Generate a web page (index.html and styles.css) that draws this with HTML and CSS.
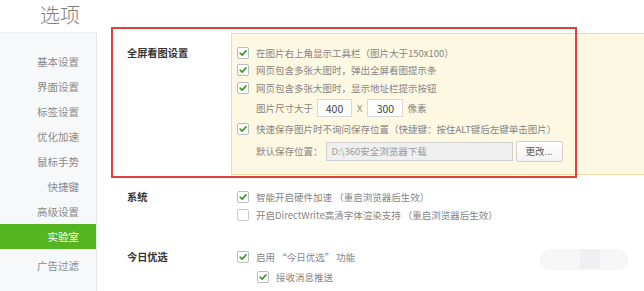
FILE: index.html
```html
<!DOCTYPE html>
<html lang="zh-CN">
<head>
<meta charset="utf-8">
<title>选项</title>
<link rel="stylesheet" href="styles.css">
</head>
<body>
<div class="page">
  <header class="top"><h1 class="title">选项</h1></header>
  <div class="main">
    <nav class="side">
      <div class="nav-item">基本设置</div>
      <div class="nav-item">界面设置</div>
      <div class="nav-item">标签设置</div>
      <div class="nav-item">优化加速</div>
      <div class="nav-item">鼠标手势</div>
      <div class="nav-item">快捷键</div>
      <div class="nav-item">高级设置</div>
      <div class="nav-item active">实验室</div>
      <div class="nav-item last">广告过滤</div>
    </nav>
    <div class="content">
      <section class="sec sec-pic">
        <div class="sec-label">全屏看图设置</div>
        <div class="panel">
          <div class="opt r1"><span class="cb"><svg viewBox="0 0 12 12"><path d="M2.6 6.2 L5 8.6 L9.6 3.4"/></svg></span>在图片右上角显示工具栏（图片大于150x100）</div>
          <div class="opt r1"><span class="cb"><svg viewBox="0 0 12 12"><path d="M2.6 6.2 L5 8.6 L9.6 3.4"/></svg></span>网页包含多张大图时，弹出全屏看图提示条</div>
          <div class="opt r1"><span class="cb"><svg viewBox="0 0 12 12"><path d="M2.6 6.2 L5 8.6 L9.6 3.4"/></svg></span>网页包含多张大图时，显示地址栏提示按钮</div>
          <div class="opt sub size-row">图片尺寸大于<span class="num">400</span><span class="x">X</span><span class="num n2">300</span><span class="unit">像素</span></div>
          <div class="opt r5"><span class="cb"><svg viewBox="0 0 12 12"><path d="M2.6 6.2 L5 8.6 L9.6 3.4"/></svg></span>快速保存图片时不询问保存位置（快捷键：按住ALT键后左键单击图片）</div>
          <div class="opt sub path-row">默认保存位置：<span class="path">D:\360安全浏览器下载</span><span class="btn">更改...</span></div>
        </div>
      </section>
      <section class="sec sec-sys">
        <div class="sec-label plain">系统</div>
        <div class="list">
          <div class="opt"><span class="cb"><svg viewBox="0 0 12 12"><path d="M2.6 6.2 L5 8.6 L9.6 3.4"/></svg></span>智能开启硬件加速 （重启浏览器后生效）</div>
          <div class="opt"><span class="cb off"></span>开启DirectWrite高清字体渲染支持 （重启浏览器后生效）</div>
        </div>
      </section>
      <section class="sec sec-today">
        <div class="sec-label plain">今日优选</div>
        <div class="list">
          <div class="opt"><span class="cb"><svg viewBox="0 0 12 12"><path d="M2.6 6.2 L5 8.6 L9.6 3.4"/></svg></span>启用 “今日优选” 功能</div>
          <div class="opt indent"><span class="cb"><svg viewBox="0 0 12 12"><path d="M2.6 6.2 L5 8.6 L9.6 3.4"/></svg></span>接收消息推送</div>
        </div>
      </section>
    </div>
  </div>
  <div class="annot"></div>
  <div class="smudge"><span></span></div>
</div>
</body>
</html>
```
FILE: styles.css
```css
* { box-sizing: border-box; }
html, body { margin: 0; padding: 0; background: #fff; }
body {
  font-family: "Noto Sans CJK SC", "Microsoft YaHei", sans-serif;
  font-size: 9.5px;
  color: #858585;
}
.page { position: relative; width: 644px; height: 291px; overflow: hidden; }

.top { height: 32px; }
.title {
  margin: 0;
  padding-left: 40px;
  font-size: 20px;
  line-height: 30px;
  font-weight: 300;
  color: #808080;
}

.main { display: flex; height: 259px; }

.side {
  width: 97px;
  flex: none;
  background: #f7f8fa;
  border-right: 1px solid #e3e5e8;
  border-top: 1px solid #eef0f2;
  padding-top: 16px;
}
.nav-item {
  height: 25px;
  line-height: 25px;
  text-align: right;
  padding-right: 17px;
  color: #8a8a8a;
  font-size: 10.5px;
}
.nav-item.active { background: #55b521; color: #fff; }
.nav-item.last { margin-top: 4px; }

.content { flex: 1; min-width: 0; }

.sec { display: flex; padding-left: 30px; }
.sec-label {
  width: 104px;
  flex: none;
  font-size: 10.2px;
  font-weight: bold;
  color: #333;
  padding-top: 11px;
  line-height: 18px;
}
.sec-label.plain { padding-top: 0; }

.sec-pic { margin-top: 1px; }
.panel {
  flex: 1;
  background: #fdf8e2;
  border: 1px solid #eedca6;
  border-right: none;
  padding: 10px 0 12px 5px;
}
.opt {
  display: flex;
  align-items: center;
  height: 18px;
  white-space: nowrap;
}
.opt.r1 { height: 17.5px; }
.opt.r5 { margin-top: 2px; height: 17.5px; }
.opt.sub { padding-left: 19px; }

.cb {
  width: 12px;
  height: 12px;
  flex: none;
  margin-right: 7px;
  border: 1px solid #b8bdc2;
  border-radius: 2px;
  background: #fff;
  display: flex;
}
.cb svg { width: 10px; height: 10px; }
.cb path { fill: none; stroke: #3d9a2c; stroke-width: 2; stroke-linecap: round; stroke-linejoin: round; }
.cb.off { border-color: #c6cacd; }

.size-row { height: 21px; margin-top: 1px; }
.num {
  width: 35px;
  height: 18px;
  margin-left: 4px;
  border: 1px solid #d8d8d8;
  background: #fff;
  color: #444;
  font-size: 10.5px;
  display: flex;
  align-items: center;
  justify-content: center;
}
.n2 { width: 36px; margin-left: 0; }
.x { margin: 0 5px; color: #888; }
.unit { margin-left: 4px; }

.path-row { height: 22px; margin-top: 2px; }
.path {
  width: 187px;
  height: 19px;
  margin-left: 3px;
  border: 1px solid #d0d0d0;
  background: #efefef;
  color: #9a9a9a;
  padding-left: 5px;
  display: flex;
  align-items: center;
}
.btn {
  width: 47px;
  height: 21px;
  margin-left: 3px;
  border: 1px solid #d0d0d0;
  border-radius: 2px;
  background: linear-gradient(#ffffff, #f3f3f3);
  color: #555;
  display: flex;
  align-items: center;
  justify-content: center;
}

.list { padding-left: 6px; }
.sec-sys { margin-top: 13px; }
.sec-today { margin-top: 24px; }
.sec-today .opt + .opt { margin-top: 2px; }
.opt.indent { padding-left: 20px; }

.annot {
  position: absolute;
  left: 111px;
  top: 27px;
  width: 466px;
  height: 151px;
  border: 2px solid #e24040;
  pointer-events: none;
}
.smudge {
  position: absolute;
  left: 540px;
  top: 249px;
  width: 88px;
  height: 21px;
  border-radius: 10px;
  background: #f6f6f7;
}
.smudge span {
  position: absolute;
  left: 40px;
  top: 0;
  width: 20px;
  height: 20px;
  background: #efeff1;
}
```
